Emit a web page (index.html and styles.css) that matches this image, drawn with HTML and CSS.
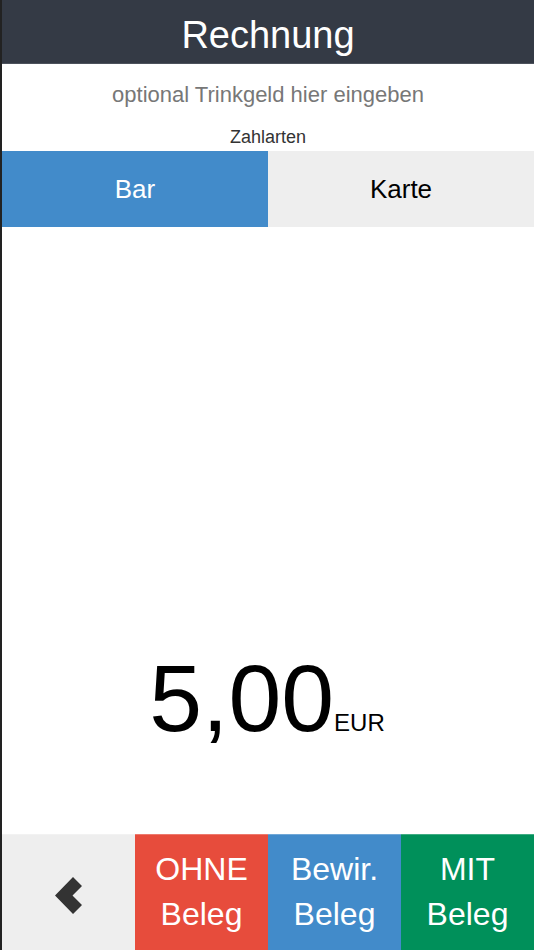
FILE: index.html
```html
<!DOCTYPE html>
<html>

<head>
    <title>Rechnung</title>
    <meta name="viewport" content="width=device-width, initial-scale=1">
    <link rel="stylesheet" href="styles.css">
</head>

<body>
    <div class="title">Rechnung</div>

    <div class="tip">optional Trinkgeld hier eingeben</div>
    <div class="label">Zahlarten</div>

    <div class="tabs">
        <div class="tab active">Bar</div>
        <div class="tab">Karte</div>
    </div>

    <div class="main">
        <div class="amount">5,00<span class="currency">EUR</span></div>
    </div>

    <div class="actions">
        <div class="action back">
            <svg width="27" height="37" viewBox="0 0 27 37">
                <polygon points="0,18.5 18,0 27,9 17.5,18.5 27,28 18,37" fill="#333"></polygon>
            </svg>
        </div>
        <div class="action red">OHNE<br>Beleg</div>
        <div class="action blue">Bewir.<br>Beleg</div>
        <div class="action green">MIT<br>Beleg</div>
    </div>
</body>

</html>
```

FILE: styles.css
```css
html,
body {
    margin: 0;
    height: 100%;
}

body {
    border-left: 2px solid #222;
    display: flex;
    flex-direction: column;
    font-family: "Liberation Sans", Arial, sans-serif;
    background-color: white;
    text-align: center;
}

.title {
    height: 64px;
    box-sizing: border-box;
    padding-top: 8px;
    line-height: 55px;
    font-size: 38px;
    color: white;
    background-color: #343a45;
    border-bottom: 1px solid #4c525c;
}

.tip {
    margin-top: 18px;
    font-size: 22px;
    line-height: 26px;
    color: #777;
}

.label {
    margin-top: 19px;
    font-size: 18px;
    line-height: 20px;
    color: #333;
}

.tabs {
    margin-top: 4px;
    display: flex;
}

.tab {
    flex: 1;
    height: 76px;
    line-height: 76px;
    font-size: 26px;
    background-color: #eeeeee;
    color: black;
}

.tab.active {
    background-color: #428bca;
    color: white;
}

.main {
    flex: 1;
    display: flex;
    flex-direction: column;
    justify-content: flex-end;
    padding-bottom: 86px;
}

.amount {
    font-size: 95px;
    line-height: 100px;
    color: black;
    padding-right: 2px;
}

.currency {
    font-size: 24px;
    line-height: 1;
}

.actions {
    display: flex;
    height: 116px;
}

.action {
    flex: 1;
    box-sizing: border-box;
    padding-top: 12px;
    font-size: 32px;
    line-height: 45px;
    color: white;
    border-top: 1px solid rgba(255, 255, 255, 0.25);
}

.back {
    background-color: #eeeeee;
    display: flex;
    align-items: center;
    justify-content: center;
    padding-top: 6px;
}

.red {
    background-color: #e74c3c;
}

.blue {
    background-color: #428bca;
}

.green {
    background-color: #00905a;
}
```
